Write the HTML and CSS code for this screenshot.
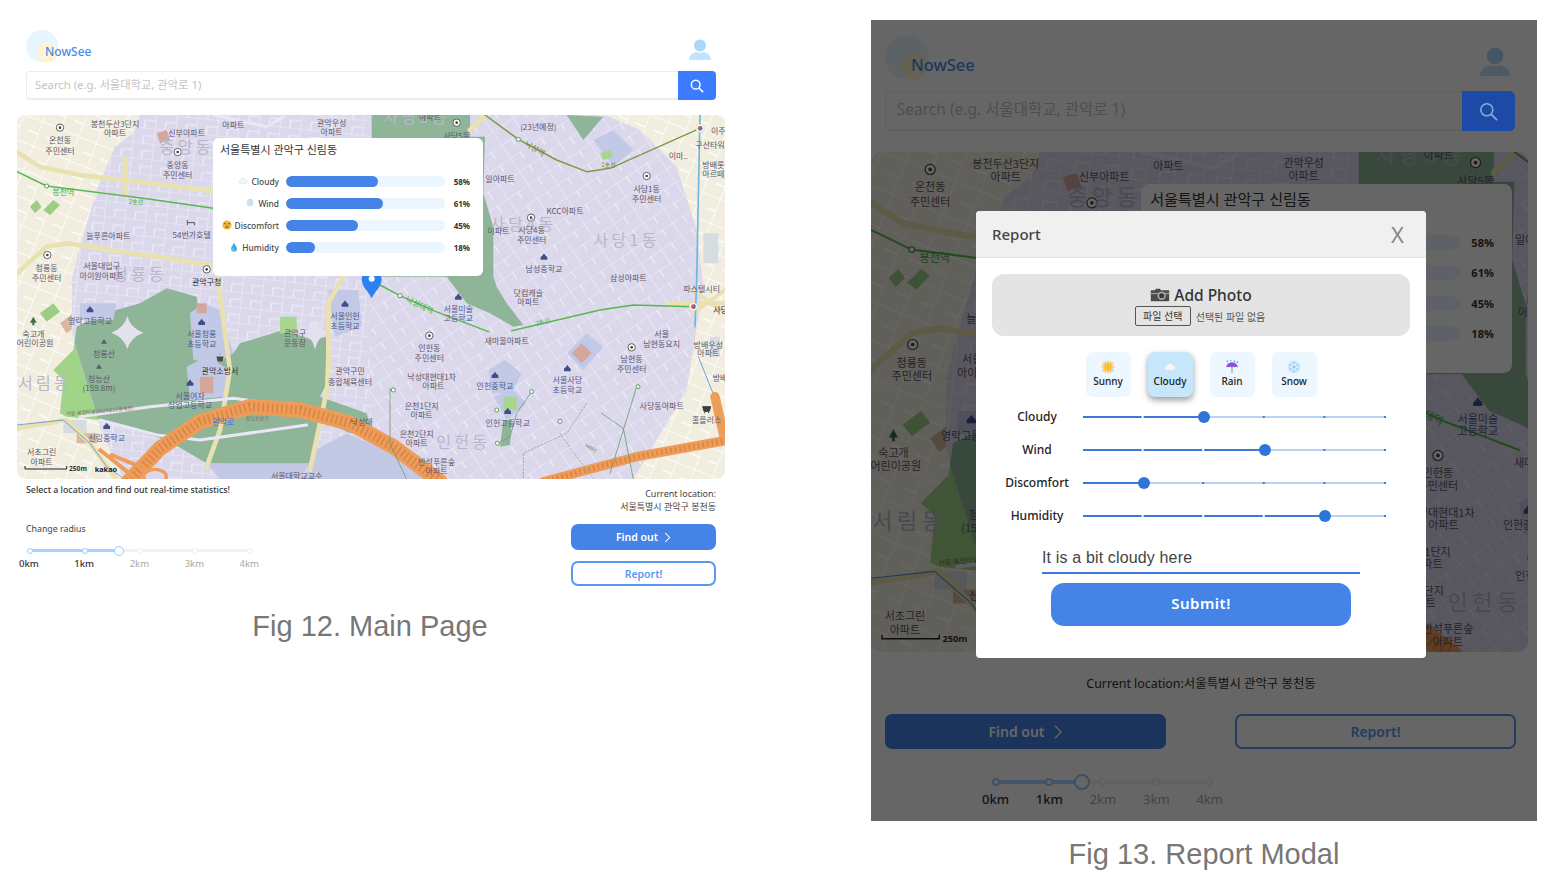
FILE: index.html
```html
<!DOCTYPE html>
<html>
<head>
    <meta charset="utf-8">
    <title>NowSee</title>
    <link rel="stylesheet" href="styles.css">
</head>
<body>
    <!-- Shared drawings: small icons and the map, used by both figures -->
    <svg class="defs" width="0" height="0">
        <defs>
            <symbol id="i-cloud" viewBox="0 0 24 24">
                <path d="M6 18a4 4 0 0 1-.6-7.9A6 6 0 0 1 17 9a4.5 4.5 0 0 1 1 9z" fill="#f4f5f8" stroke="#d3d8df"/>
            </symbol>
            <symbol id="i-wind" viewBox="0 0 24 24">
                <path d="M13 2c5 1 8 6 7 11s-6 9-11 7-6-8-4-12 5-7 8-6z" fill="#c9dff3"/>
                <path d="M9 8c4-2 7 0 6 4s-4 3-4 1" fill="none" stroke="#f4f9fe" stroke-width="2"/>
                <path d="M15 3l-3 8 5 3" fill="none" stroke="#8db2d4"/>
            </symbol>
            <symbol id="i-face" viewBox="0 0 24 24">
                <circle cx="12" cy="12" r="11" fill="#f3b53e"/>
                <path d="M5 8l5 2M19 8l-5 2" stroke="#7a4a10" stroke-width="2"/>
                <path d="M7 18c2-4 8-4 10 0z" fill="#7a4a10"/>
            </symbol>
            <symbol id="i-drop" viewBox="0 0 24 24">
                <path d="M12 1C9 8 5 11 5 16a7 7 0 0 0 14 0c0-5-4-8-7-15z" fill="#41a9e6"/>
                <path d="M9 16c0 2 1 3 3 4" fill="none" stroke="#d6f0ff" stroke-width="2"/>
            </symbol>
            <symbol id="i-sun" viewBox="0 0 24 24">
                <path d="M12 1v22M1 12h22M4 4l16 16M20 4L4 20M7 2l10 20M17 2L7 22M2 7l20 10M2 17l20-10" stroke="#f5a623" stroke-width="1.6"/>
                <circle cx="12" cy="12" r="6.5" fill="#fbc02d"/>
            </symbol>
            <symbol id="i-rain" viewBox="0 0 24 24">
                <path d="M12 12v10" stroke="#777" stroke-width="1.4"/>
                <path d="M2 13a10 9 0 0 1 20 0c-2-2-4-2-5 0-1-2-3-2-5 0-2-2-4-2-5 0-1-2-3-2-5 0z" fill="#8a52d6"/>
                <path d="M4 1v3M10 0v2M16 1v3M21 2v3" stroke="#3d8fe0" stroke-width="1.8"/>
            </symbol>
            <symbol id="i-snow" viewBox="0 0 24 24">
                <circle cx="12" cy="12" r="11" fill="#cbe7fb"/>
                <path d="M12 3v18M4 7.500l16 9M20 7.500l-16 9" stroke="#84c2f0" stroke-width="1.600"/>
                <circle cx="12" cy="12" r="4" fill="none" stroke="#f3fbff" stroke-width="1.500"/>
            </symbol>
            <symbol id="i-camera" viewBox="0 0 24 18">
                <path d="M1 4h5l1-2h5l1 2h10v13H1z" fill="#4b4b4b"/>
                <rect x="1" y="7" width="22" height="1.600" fill="#9a9a9a"/>
                <circle cx="14" cy="10.500" r="5" fill="#a6a6a6"/>
                <circle cx="14" cy="10.500" r="3" fill="#3a3a3a"/>
            </symbol>

            <!-- map markers -->
            <g id="mk-center"><circle r="11" fill="#fff" stroke="#444" stroke-width="2.500"/><circle r="4" fill="#444"/></g>
            <path id="mk-school" d="M0-12l5 7 5 4v8H-10v-8l5-4z" fill="#3f4f8a"/>
            <path id="mk-peak" d="M0-8l9 14H-9z" fill="#55606a"/>
            <g id="mk-stop"><circle r="6" fill="#fff" stroke="#5c9a62" stroke-width="3"/></g>
            <g id="mk-subway"><circle r="12" fill="#fff" stroke="#d8d2a8" stroke-width="2"/><circle r="7" fill="#e0583c"/><path d="M0-7a7 7 0 0 1 0 14z" fill="#3f78d8"/></g>

            <pattern id="st-a" width="62" height="46" patternUnits="userSpaceOnUse" patternTransform="rotate(6)">
                <path d="M0 0H62M0 0V46M31 23V46M31 23H62" stroke="#f0eef9" stroke-width="3.500" fill="none"/>
            </pattern>
            <pattern id="st-b" width="74" height="48" patternUnits="userSpaceOnUse" patternTransform="rotate(-34)">
                <path d="M0 0H74M0 0V48M37 0V24" stroke="#f0eef9" stroke-width="3.500" fill="none"/>
            </pattern>
            <pattern id="st-c" width="58" height="78" patternUnits="userSpaceOnUse" patternTransform="rotate(22)">
                <path d="M0 0H58M0 0V78M29 40H58" stroke="#fff" stroke-width="4" fill="none"/>
            </pattern>
            <clipPath id="district">
                <path d="M420 285L400 340 345 380 290 510 235 700 215 780V930L230 990 280 1150 300 1220 370 1378H1900L2000 1210 2060 1110 2110 800 2090 630 2030 440 1920 330 1815 285z"/>
            </clipPath>
            <path id="park" d="M230 920L330 875 420 850 500 805 590 830 610 1000 700 1000 720 970 850 930 940 960 980 950 975 1100 960 1130 1100 1180 1115 1230 1050 1240 970 1200 940 1290 930 1340 620 1330 500 1260 300 1200 200 1190 180 1180 190 1080 160 1050 220 990zM1115 285H1410V350H1455L1450 520 1480 620 1480 770 1490 800 1520 850 1570 915 1540 920 1470 880 1400 850 1340 770H1115z"/>

            <symbol id="map-art" viewBox="51 285 2124 1092">
                <rect x="51" y="285" width="2124" height="1092" fill="#f1eee0"/>
                <rect x="51" y="285" width="2124" height="1092" fill="url(#st-c)"/>
                <use href="#park" fill="#a0d488"/>
                <path d="M1950 420h40v70h-40zM2110 640h45v90h-45zM2130 950h30v60h-30zM190 1200h70v40h-70z" fill="#d6dde0"/>
                <path d="M230 1240h60v30h-60zM220 880l-40 30 20 30 40-30z" fill="#d8b99c"/>

                <g clip-path="url(#district)">
                    <rect x="51" y="285" width="2124" height="1092" fill="#dcd8ec"/>
                    <rect x="51" y="285" width="1060" height="1092" fill="url(#st-a)"/>
                    <rect x="1110" y="285" width="1065" height="1092" fill="url(#st-b)"/>
                    <use href="#park" fill="#8fb598"/>
                    <path d="M620 1330H930L900 1378H660zM945 1290L1040 1240 1180 1300 1320 1378H910z" fill="#c3c8e4"/>
                </g>

                <!-- school grounds and other patches -->
                <path d="M240 850h110l-10 50H240zM570 880l40-30 50 20 40 130-50 30-70-10zM560 1040l60-30 70 40-20 80-100 10zM985 810h90l10 110-80 30zM1465 1050l50-30 50 40-30 60h-60zM1700 1000l60-60 50 40-60 70zM1480 1130l60-20 40 40-60 50zM1780 360l60-30 60 60-60 50z" fill="#c2c9e6"/>
                <path d="M600 1070h40v50h-40zM1715 1000l30-30 30 30-30 30zM590 850h30v30h-30zM470 340l30-10 10 30-30 10z" fill="#d3a79c"/>
                <path d="M1700 285l110 5-60 70zM1510 1200l-10 80 30-5 5-75z" fill="#8fb598"/>
                <path d="M1510 1130h40v40h-40zM1800 400l30-10 10 20-30 10zM840 890h50v50h-50z" fill="#a9d68f"/>
                <path d="M120 880l40-30 20 25-40 30zM90 560l20-20 15 20-20 20zM130 570l30-30 20 15-30 30z" fill="#9ccd85"/>

                <!-- four-point stars -->
                <path d="M382 888q8 35 48 50-40 15-48 50-8-35-48-50 40-15 48-50zM945 900q8 30 45 38-37 10-45 50-8-40-45-50 37-8 45-38z" fill="#e4e1ee"/>

                <!-- main roads -->
                <g fill="none" stroke-linecap="round" stroke-linejoin="round">
                    <path d="M40 390L120 440 240 465 700 520M40 770L140 680 200 670 700 745M375 415V525M650 750L690 1050 660 1230 620 1340M1040 750L985 850 985 1090 930 1350M1455 285L1410 330M2010 850H2175" stroke="#e9e1b0" stroke-width="14"/>
                    <path d="M2080 810L2175 880M2175 810L2080 880" stroke="#e9e1b0" stroke-width="11"/>
                    <path d="M240 1190L450 1160 700 1135 850 1155M300 1200L470 1245 600 1260 920 1215M640 285L800 320 850 290" stroke="#e9e6f5" stroke-width="9"/>
                    <path d="M51 1225L200 1200 270 1270 350 1378" stroke="#e9e1b0" stroke-width="14"/>

                    <!-- subway lines -->
                    <path d="M51 455L140 498 430 535 640 565M1140 795L1200 827 1300 872 1465 935M1535 932L1800 870 1900 855 2080 860" stroke="#58b84e" stroke-width="4.500"/>
                    <path d="M1455 285L1555 358 1670 420 1760 455 1830 445 2100 325" stroke="#7d9a4a" stroke-width="4.500"/>
                    <path d="M2100 285L2090 780 2085 920" stroke="#6db8de" stroke-width="5"/>
                    <path d="M2095 1010L2175 1210" stroke="#4a93dc" stroke-width="2.500"/>
                    <path d="M51 1215L190 1200 270 1270 320 1340 375 1378" stroke="#5b8fd8" stroke-width="2.500"/>

                    <!-- expressway -->
                    <path d="M385 1385L480 1285 600 1205 750 1160 900 1170 1050 1210 1180 1280 1320 1385" stroke="#ee9c5a" stroke-width="46"/>
                    <path d="M385 1385L480 1285 600 1205 750 1160 900 1170 1050 1210 1180 1280 1320 1385" stroke="#d98644" stroke-width="28" stroke-dasharray="5 9" stroke-linecap="butt"/>
                    <path d="M1630 1385L1910 1310 2175 1262M2145 1130L2172 1250" stroke="#ee9c5a" stroke-width="28"/>
                    <path d="M1630 1385L1910 1310 2175 1262" stroke="#d98644" stroke-width="16" stroke-dasharray="5 9" stroke-linecap="butt"/>
                    <path d="M300 1290L400 1370M335 1305L420 1340 500 1385" stroke="#ee9c5a" stroke-width="12"/>
                    <ellipse cx="465" cy="1370" rx="34" ry="22" fill="#dcd8ec" stroke="#ee9c5a" stroke-width="10"/>

                    <!-- trails -->
                    <path d="M1170 1105L1170 1270 1220 1378M1595 1115L1550 1180 1530 1250 1495 1270M1910 1100L1870 1230 1830 1360M1805 1180L1870 1225 1900 1378" stroke="#6f9c74" stroke-width="2.500"/>
                    <path d="M1760 1150L1700 1240 1570 1300 1570 1378M1680 1240L1780 1378" stroke="#86a98a" stroke-width="2.500" stroke-dasharray="5 6"/>
                </g>

                <use href="#mk-stop" x="140" y="498"/>
                <use href="#mk-stop" x="1555" y="358"/>
                <use href="#mk-stop" x="1200" y="827"/>
                <use href="#mk-stop" x="1180" y="1110"/>
                <use href="#mk-stop" x="1595" y="1115"/>
                <use href="#mk-stop" x="1490" y="1170"/>
                <use href="#mk-stop" x="1680" y="1204"/>
                <use href="#mk-stop" x="1492" y="1270"/>
                <use href="#mk-stop" x="1914" y="1100"/>
                <use href="#mk-subway" x="2100" y="325"/>
                <use href="#mk-subway" x="2080" y="860"/>

                <use href="#mk-center" x="180" y="323"/>
                <use href="#mk-center" x="533" y="396"/>
                <use href="#mk-center" x="142" y="705"/>
                <use href="#mk-center" x="620" y="748"/>
                <use href="#mk-center" x="1370" y="308"/>
                <use href="#mk-center" x="1940" y="468"/>
                <use href="#mk-center" x="1593" y="593"/>
                <use href="#mk-center" x="1288" y="947"/>
                <use href="#mk-center" x="1895" y="982"/>

                <use href="#mk-school" x="270" y="870"/>
                <use href="#mk-school" x="605" y="908"/>
                <use href="#mk-school" x="570" y="1090"/>
                <use href="#mk-school" x="320" y="1220"/>
                <use href="#mk-school" x="1035" y="853"/>
                <use href="#mk-school" x="1632" y="712"/>
                <use href="#mk-school" x="1375" y="832"/>
                <use href="#mk-school" x="1485" y="1067"/>
                <use href="#mk-school" x="1523" y="1175"/>
                <use href="#mk-school" x="1702" y="1047"/>
                <use href="#mk-peak" x="312" y="965"/>
                <use href="#mk-peak" x="297" y="1040"/>
                <path d="M100 890l10 18h-7v8h-6v-8h-7z" fill="#3e6b4a"/>
                <path d="M650 1010h20l-3 14h-14zM660 1005v-6" fill="#4d4a3c" stroke="#4d4a3c"/>
                <path d="M2108 1160h24l-4 14h-16zM2112 1178h3M2124 1178h3" fill="#3d3d3d" stroke="#3d3d3d" stroke-width="3"/>
                <path d="M562 600v16M562 608h22v8" fill="none" stroke="#555" stroke-width="3"/>

                <!-- faint district names -->
                <g class="ml-big">
                    <text x="560" y="400">중앙동</text>
                    <text x="135" y="1108">서림동</text>
                    <text x="1880" y="678">사당1동</text>
                    <text x="1570" y="630">사당4동</text>
                    <text x="1390" y="1285">인헌동</text>
                    <text x="1250" y="310">사당5동</text>
                    <text x="420" y="780">청룡동</text>
                </g>

                <g class="ml">
                    <text x="345" y="320">봉천두산3단지</text><text x="345" y="348">아파트</text>
                    <text x="180" y="370">온천동</text><text x="180" y="402">주민센터</text>
                    <text x="560" y="348">신부아파트</text>
                    <text x="700" y="325">아파트</text>
                    <text x="995" y="318">관악우성</text><text x="995" y="346">아파트</text>
                    <text x="533" y="443">중앙동</text><text x="533" y="473">주민센터</text>
                    <text x="575" y="653">54번가호텔</text>
                    <text x="325" y="658">늘푸른아파트</text>
                    <text x="140" y="753">청룡동</text><text x="140" y="783">주민센터</text>
                    <text x="305" y="746">서울대입구</text><text x="305" y="776">아이원아파트</text>
                    <text x="1290" y="300">아파트</text>
                    <text x="1370" y="358">사당5동</text>
                    <text x="1615" y="330">(23년예정)</text>
                    <text x="2130" y="383">구산타워</text>
                    <text x="2155" y="343">이주</text>
                    <text x="2035" y="418">이마..</text>
                    <text x="2140" y="443">방배롯</text><text x="2140" y="471">아르떼</text>
                    <text x="1940" y="516">사당1동</text><text x="1940" y="546">주민센터</text>
                    <text x="1500" y="485">일아파트</text>
                    <text x="1695" y="583">KCC아파트</text>
                    <text x="1595" y="640">사당4동</text><text x="1595" y="670">주민센터</text>
                    <text x="1495" y="643">이파트</text>
                    <text x="1885" y="783">삼성아파트</text>
                    <text x="100" y="950">숙고개</text><text x="105" y="978">어린이공원</text>
                    <text x="312" y="1010">청룡산</text>
                    <text x="297" y="1085">청능산</text><text x="297" y="1113">(159.8m)</text>
                    <text x="1050" y="1061">관악구민</text><text x="1050" y="1095">종합체육센터</text>
                    <text x="885" y="948">관악구</text><text x="885" y="978">운동장</text>
                    <text x="125" y="1306">서초그린</text><text x="125" y="1336">아파트</text>
                    <text x="1085" y="1216">낙성대</text>
                    <text x="890" y="1378">서울대학교교수</text>
                    <text x="2105" y="815">파스텔시티</text>
                    <text x="2125" y="983">방배우성</text><text x="2125" y="1008">아파트</text>
                    <text x="2160" y="1083">방배</text>
                    <text x="1985" y="951">서울</text><text x="1985" y="980">남현동요지</text>
                    <text x="1895" y="1026">남현동</text><text x="1895" y="1056">주민센터</text>
                    <text x="1985" y="1166">사당동아파트</text>
                    <text x="2120" y="1210">홈플러스</text>
                    <text x="1585" y="828">닷컴캐슬</text><text x="1585" y="855">아파트</text>
                    <text x="1520" y="973">새마을아파트</text>
                    <text x="1288" y="993">인헌동</text><text x="1288" y="1023">주민센터</text>
                    <text x="1295" y="1081">낙성대현대1차</text><text x="1300" y="1108">아파트</text>
                    <text x="1265" y="1166">은천1단지</text><text x="1265" y="1193">아파트</text>
                    <text x="1250" y="1251">은천2단지</text><text x="1250" y="1278">아파트</text>
                    <text x="1310" y="1335">반석푸른숲</text><text x="1310" y="1363">아파트</text>
                </g>
                <g class="ml ml-blue">
                    <text x="270" y="913">영락고등학교</text>
                    <text x="605" y="950">서울청룡</text><text x="605" y="980">초등학교</text>
                    <text x="570" y="1136">서울여자</text><text x="570" y="1163">상업고등학교</text>
                    <text x="1035" y="898">서울인헌</text><text x="1035" y="926">초등학교</text>
                    <text x="320" y="1263">신림중학교</text>
                    <text x="1632" y="755">남성중학교</text>
                    <text x="1375" y="876">서울미술</text><text x="1375" y="903">고등학교</text>
                    <text x="1485" y="1108">인헌중학교</text>
                    <text x="1523" y="1218">인헌고등학교</text>
                    <text x="1702" y="1090">서울사당</text><text x="1702" y="1118">초등학교</text>
                    <text x="670" y="1216" class="ml-road">관악로</text>
                </g>
                <g class="ml ml-dark">
                    <text x="620" y="796">관악구청</text>
                    <text x="660" y="1063">관악소방서</text>
                    <text x="2140" y="878" text-anchor="start">사당역</text>
                </g>
                <g class="ml ml-green">
                    <text x="190" y="525">봉천역</text>
                    <text x="408" y="552" font-size="18">2호선</text>
                    <text transform="translate(1255 863) rotate(25)">낙성대역</text>
                    <text transform="translate(1630 912) rotate(-15)" font-size="18">2호선</text>
                </g>
                <g class="ml ml-olive">
                    <text transform="translate(1600 393) rotate(32)">낙성역</text>
                    <text x="1825" y="442" font-size="18">1호선</text>
                </g>
                <text class="ml ml-tiny" x="772" y="1199">강남순환로</text>
                <text class="ml ml-tiny" transform="translate(300 1178) rotate(-5)">서림-봉천터널(2023년12월예정)</text>
                <text class="ml ml-tiny" transform="translate(1775 1280) rotate(210)">100m</text>

                <path d="M75 1338v9H200v-9" fill="none" stroke="#222" stroke-width="3"/>
                <text class="ml-scale" x="207" y="1354">250m</text>
                <text class="ml-kakao" x="284" y="1355">kakao</text>

                <!-- location pin -->
                <path d="M1115 835c-10-22-30-34-30-58a30 30 0 0 1 60 0c0 24-20 36-30 58z" fill="#2f80f0"/>
                <circle cx="1115" cy="776" r="9" fill="#fff"/>
            </symbol>
        </defs>
    </svg>

    <div class="page">
        <!-- Fig 12 -->
        <section class="figure fig-main">
            <div class="top">
                <div class="brand-row">
                    <div class="logo"><span class="logo-sun"></span><span class="logo-name">NowSee</span></div>
                    <svg class="user-icon" viewBox="0 0 22 21"><circle cx="11" cy="6.500" r="6" fill="#a9d8fb"/><path d="M0 21c0-5 4-7 7-8 2 1 6 1 8 0 3 1 7 3 7 8z" fill="#c2e3fb"/></svg>
                </div>
                <div class="search">
                    <div class="search-input">Search (e.g. 서울대학교, 관악로 1)</div>
                    <div class="search-btn">
                        <svg viewBox="0 0 16 16" width="14" height="14"><circle cx="6.500" cy="6.500" r="5" fill="none" stroke="#fff" stroke-width="1.700"/><path d="M10 10l5 5" stroke="#fff" stroke-width="1.800"/></svg>
                    </div>
                </div>
            </div>
            <div class="map-panel">
                <svg class="map-svg"><use href="#map-art"/></svg>
                <div class="stats-card">
                    <div class="stats-title">서울특별시 관악구 신림동</div>
                    <div class="stat-row">
                        <div class="stat-label"><svg class="stat-icon"><use href="#i-cloud"/></svg>Cloudy</div>
                        <div class="bar"><div class="bar-fill" style="width:58%"></div></div>
                        <div class="stat-pct">58%</div>
                    </div>
                    <div class="stat-row">
                        <div class="stat-label"><svg class="stat-icon"><use href="#i-wind"/></svg>Wind</div>
                        <div class="bar"><div class="bar-fill" style="width:61%"></div></div>
                        <div class="stat-pct">61%</div>
                    </div>
                    <div class="stat-row">
                        <div class="stat-label"><svg class="stat-icon"><use href="#i-face"/></svg>Discomfort</div>
                        <div class="bar"><div class="bar-fill" style="width:45%"></div></div>
                        <div class="stat-pct">45%</div>
                    </div>
                    <div class="stat-row">
                        <div class="stat-label"><svg class="stat-icon"><use href="#i-drop"/></svg>Humidity</div>
                        <div class="bar"><div class="bar-fill" style="width:18%"></div></div>
                        <div class="stat-pct">18%</div>
                    </div>
                </div>
            </div>
            <div class="controls">
                <div class="controls-left">
                    <div class="hint">Select a location and find out real-time statistics!</div>
                    <div class="radius-title">Change radius</div>
                    <div class="radius">
                        <div class="radius-track">
                            <div class="radius-fill" style="width:40.500%"></div>
                            <span class="radius-dot on"></span><span class="radius-dot on"></span><span class="radius-dot"></span><span class="radius-dot"></span><span class="radius-dot"></span>
                            <span class="radius-handle" style="left:40.500%"></span>
                        </div>
                        <div class="radius-labels"><span class="on">0km</span><span class="on">1km</span><span>2km</span><span>3km</span><span>4km</span></div>
                    </div>
                </div>
                <div class="controls-right">
                    <div class="location"><div>Current location:</div><div>서울특별시 관악구 봉천동</div></div>
                    <div class="btn btn-primary">Find out <svg class="chevron" viewBox="0 0 8 12"><path d="M1.500 1l5 5-5 5" fill="none" stroke="#fff" stroke-width="1.200"/></svg></div>
                    <div class="btn btn-outline">Report!</div>
                </div>
            </div>
            <div class="caption caption-main">Fig 12. Main Page</div>
        </section>

        <!-- Fig 13 -->
        <section class="figure fig-report">
            <div class="shot">
                <div class="top">
                    <div class="brand-row">
                        <div class="logo"><span class="logo-sun"></span><span class="logo-name">NowSee</span></div>
                        <svg class="user-icon" viewBox="0 0 22 21"><circle cx="11" cy="6.500" r="6" fill="#a9d8fb"/><path d="M0 21c0-5 4-7 7-8 2 1 6 1 8 0 3 1 7 3 7 8z" fill="#c2e3fb"/></svg>
                    </div>
                    <div class="search">
                        <div class="search-input">Search (e.g. 서울대학교, 관악로 1)</div>
                        <div class="search-btn">
                            <svg viewBox="0 0 16 16" width="14" height="14"><circle cx="6.500" cy="6.500" r="5" fill="none" stroke="#8fa8d8" stroke-width="1.300"/><path d="M10 10l5 5" stroke="#8fa8d8" stroke-width="1.400"/></svg>
                        </div>
                    </div>
                </div>
                <div class="map-panel">
                    <svg class="map-svg"><use href="#map-art"/></svg>
                    <div class="stats-card">
                        <div class="stats-title">서울특별시 관악구 신림동</div>
                        <div class="stat-row"><div class="stat-label"></div><div class="bar"><div class="bar-fill" style="width:58%"></div></div><div class="stat-pct">58%</div></div>
                        <div class="stat-row"><div class="stat-label"></div><div class="bar"><div class="bar-fill" style="width:61%"></div></div><div class="stat-pct">61%</div></div>
                        <div class="stat-row"><div class="stat-label"></div><div class="bar"><div class="bar-fill" style="width:45%"></div></div><div class="stat-pct">45%</div></div>
                        <div class="stat-row"><div class="stat-label"></div><div class="bar"><div class="bar-fill" style="width:18%"></div></div><div class="stat-pct">18%</div></div>
                    </div>
                </div>
                <div class="location-line">Current location:서울특별시 관악구 봉천동</div>
                <div class="btn-row">
                    <div class="btn btn-primary">Find out <svg class="chevron" viewBox="0 0 8 12"><path d="M1.500 1l5 5-5 5" fill="none" stroke="#fff" stroke-width="1"/></svg></div>
                    <div class="btn btn-outline">Report!</div>
                </div>
                <div class="radius">
                    <div class="radius-track">
                        <div class="radius-fill" style="width:40.500%"></div>
                        <span class="radius-dot on"></span><span class="radius-dot on"></span><span class="radius-dot"></span><span class="radius-dot"></span><span class="radius-dot"></span>
                        <span class="radius-handle" style="left:40.500%"></span>
                    </div>
                    <div class="radius-labels"><span class="on">0km</span><span class="on">1km</span><span>2km</span><span>3km</span><span>4km</span></div>
                </div>

                <div class="dim"></div>

                <div class="modal">
                    <div class="modal-head"><span>Report</span><span class="modal-close">X</span></div>
                    <div class="modal-body">
                        <div class="photo-box">
                            <div class="photo-title"><svg class="photo-icon"><use href="#i-camera"/></svg>Add Photo</div>
                            <div class="file-row"><span class="file-btn">파일 선택</span><span>선택된 파일 없음</span></div>
                        </div>
                        <div class="weather">
                            <div class="weather-tile"><svg class="weather-icon"><use href="#i-sun"/></svg>Sunny</div>
                            <div class="weather-tile selected"><svg class="weather-icon"><use href="#i-cloud"/></svg>Cloudy</div>
                            <div class="weather-tile"><svg class="weather-icon"><use href="#i-rain"/></svg>Rain</div>
                            <div class="weather-tile"><svg class="weather-icon"><use href="#i-snow"/></svg>Snow</div>
                        </div>
                        <div class="sliders">
                            <div class="slider-row"><span class="slider-name">Cloudy</span><div class="range"><div class="range-fill" style="width:40%"></div><span class="range-thumb" style="left:40%"></span></div></div>
                            <div class="slider-row"><span class="slider-name">Wind</span><div class="range"><div class="range-fill" style="width:60%"></div><span class="range-thumb" style="left:60%"></span></div></div>
                            <div class="slider-row"><span class="slider-name">Discomfort</span><div class="range"><div class="range-fill" style="width:20%"></div><span class="range-thumb" style="left:20%"></span></div></div>
                            <div class="slider-row"><span class="slider-name">Humidity</span><div class="range"><div class="range-fill" style="width:80%"></div><span class="range-thumb" style="left:80%"></span></div></div>
                        </div>
                        <div class="note">It is a bit cloudy here</div>
                        <div class="submit">Submit!</div>
                    </div>
                </div>
            </div>
            <div class="caption caption-report">Fig 13. Report Modal</div>
        </section>
    </div>
</body>
</html>
```

FILE: styles.css
```css
* {
    box-sizing: border-box;
}

body {
    margin: 0;
    background: #fff;
    font-family: "Noto Sans", "Noto Sans CJK KR", sans-serif;
    color: #333;
}

.defs {
    position: absolute;
}

.page {
    display: flex;
    align-items: flex-start;
    width: 1560px;
    height: 882px;
    overflow: hidden;
}

.fig-main {
    width: 740px;
    margin-right: 131px;
    padding: 30px 0 0 17px;
}

.fig-report {
    width: 666px;
    margin-top: 20px;
}

/* Header and search */
.top {
    width: 690px;
    margin: 0 0 15px 9px;
}

.brand-row {
    display: flex;
    justify-content: space-between;
    align-items: flex-start;
    height: 41px;
}

.logo {
    position: relative;
    width: 32px;
    height: 32px;
    border-radius: 50%;
    background: #e8f5fe;
}

.logo-sun {
    position: absolute;
    left: 11px;
    top: 13px;
    width: 20px;
    height: 20px;
    border-radius: 50%;
    background: #fdf5d2;
}

.logo-name {
    position: absolute;
    left: 19px;
    top: 13px;
    font-size: 12px;
    line-height: 18px;
    font-weight: 500;
    color: #4a8be8;
}

.user-icon {
    width: 22px;
    height: 21px;
    margin: 9px 5px 0 0;
}

.search {
    display: flex;
    height: 29px;
}

.search-input {
    flex: 1;
    padding-left: 8px;
    border: 1px solid #eceded;
    border-bottom-width: 2px;
    border-right: 0;
    border-radius: 4px 0 0 4px;
    font-size: 11.300px;
    line-height: 26px;
    color: #c4c4c4;
}

.search-btn {
    display: flex;
    align-items: center;
    justify-content: center;
    width: 38px;
    background: #3a7bff;
    border-radius: 0 4px 4px 0;
}

/* Map */
.map-panel {
    position: relative;
    width: 708px;
    height: 364px;
    border-radius: 8px;
    overflow: hidden;
}

.map-svg {
    display: block;
    width: 708px;
    height: 364px;
}

.ml, .ml-big {
    font-family: "Noto Sans CJK KR", sans-serif;
    text-anchor: middle;
}

.ml {
    font-size: 24px;
    fill: #5c5769;
}

.ml-big {
    font-size: 48px;
    letter-spacing: 10px;
    fill: #b9b5ca;
}

.ml-blue {
    fill: #4e5b8b;
}

.ml-road {
    fill: #3f6fd8;
}

.ml-dark {
    fill: #2a2a2a;
}

.ml-green {
    fill: #46b13f;
}

.ml-olive {
    fill: #6f8a3c;
}

.ml-tiny {
    font-size: 15px;
    fill: #7a6a5a;
}

.ml-scale, .ml-kakao {
    font-family: "Noto Sans", sans-serif;
    font-size: 20px;
    font-weight: 700;
    fill: #333;
}

.ml-kakao {
    font-size: 22px;
    fill: #222;
}

.stats-card {
    position: absolute;
    left: 196px;
    top: 23px;
    width: 270px;
    height: 138px;
    padding: 4px 13px 0 7px;
    background: #fff;
    border-radius: 6px;
}

.stats-title {
    font-size: 11px;
    line-height: 15px;
    color: #333;
    margin-bottom: 13px;
}

.stat-row {
    display: grid;
    grid-template-columns: 59px 159px 18px;
    column-gap: 7px;
    align-items: center;
    height: 22px;
}

.stat-label {
    display: flex;
    justify-content: flex-end;
    align-items: center;
    gap: 3px;
    font-size: 8.400px;
    font-weight: 500;
    color: #4a4a4a;
    white-space: nowrap;
}

.stat-icon {
    width: 10px;
    height: 10px;
}

.bar {
    height: 11px;
    border-radius: 6px;
    background: #ebf6fe;
    overflow: hidden;
}

.bar-fill {
    height: 100%;
    background: #4583e6;
    border-radius: 6px;
}

.stat-pct {
    font-size: 8px;
    font-weight: 700;
    color: #333;
    text-align: right;
}

/* Controls under the map (Fig 12) */
.controls {
    display: flex;
    justify-content: space-between;
    width: 690px;
    margin-left: 9px;
}

.hint {
    margin-top: 5px;
    font-size: 8.800px;
    line-height: 12px;
    font-weight: 500;
    color: #333;
}

.radius-title {
    margin-top: 27px;
    font-size: 8.800px;
    line-height: 12px;
    color: #444;
}

.controls-left .radius {
    width: 220px;
    margin: 14px 0 0 4px;
}

.radius-track {
    position: relative;
    display: flex;
    justify-content: space-between;
    align-items: center;
    height: 3px;
    background: #f3f3f3;
}

.radius-fill {
    position: absolute;
    left: 0;
    top: 0;
    height: 3px;
    background: #a6d1ff;
}

.radius-dot {
    position: relative;
    width: 6px;
    height: 6px;
    margin: 0 -3px;
    background: #fff;
    border: 1px solid #eeeeee;
    border-radius: 50%;
}

.radius-dot.on {
    border-color: #9accff;
}

.radius-handle {
    position: absolute;
    top: -3.500px;
    width: 10px;
    height: 10px;
    margin-left: -5px;
    background: #fff;
    border: 1.500px solid #98c8ff;
    border-radius: 50%;
}

.radius-labels {
    display: flex;
    justify-content: space-between;
    margin: 5px -9px 0 -11px;
    font-size: 9.500px;
    line-height: 13px;
    color: #a8a8a8;
}

.radius-labels .on {
    color: #333;
    font-weight: 500;
}

.controls-right {
    width: 145px;
}

.location {
    margin-top: 8px;
    font-size: 9px;
    line-height: 13px;
    text-align: right;
    color: #444;
}

.btn {
    display: flex;
    align-items: center;
    justify-content: center;
    gap: 6px;
    height: 26px;
    border-radius: 7px;
    font-size: 10.500px;
    font-weight: 600;
}

.controls-right .btn-primary {
    margin-top: 11px;
}

.controls-right .btn-outline {
    height: 25px;
    margin-top: 11px;
}

.btn-primary {
    background: #4583e6;
    color: #fff;
}

.btn-outline {
    background: #fff;
    border: 2px solid #5a97f2;
    color: #5a97f2;
}

.chevron {
    width: 7px;
    height: 11px;
}

/* Captions */
.caption {
    font-family: "Liberation Sans", sans-serif;
    font-size: 29px;
    line-height: 34px;
    color: #777;
    text-align: center;
}

.caption-main {
    width: 708px;
    margin: 23px 0 0 -1px;
}

.caption-report {
    margin-top: 16px;
}

/* Fig 13 */
.shot {
    position: relative;
    height: 801px;
    padding-top: 15px;
    overflow: hidden;
}

.shot .top {
    zoom: 1.375;
    width: 458px;
    margin-left: 10px;
}

.shot .user-icon {
    margin-right: 3px;
}

/* this button stays bright under the dimmed layer in the screenshot */
.shot .search-btn {
    position: relative;
    z-index: 1;
    background: #1c4aa6;
}

.shot .map-panel {
    zoom: 1.375;
    width: 478px;
}

.location-line {
    margin-top: 23px;
    padding-right: 6px;
    font-size: 12.400px;
    line-height: 18px;
    text-align: center;
    color: #333;
}

.btn-row {
    display: flex;
    justify-content: space-between;
    width: 631px;
    margin: 21px 0 0 14px;
}

.btn-row .btn {
    width: 281px;
    height: 35px;
    gap: 8px;
    font-size: 14px;
}

.btn-row .chevron {
    width: 10px;
    height: 16px;
}

.shot .radius {
    width: 213px;
    margin: 31px 0 0 125px;
}

.shot .radius-track {
    height: 4px;
}

.shot .radius-fill {
    height: 4px;
}

.shot .radius-dot {
    width: 8px;
    height: 8px;
    margin: 0 -4px;
    border-width: 2px;
}

.shot .radius-handle {
    top: -6px;
    width: 16px;
    height: 16px;
    margin-left: -8px;
    border-width: 2px;
}

.shot .radius-labels {
    margin: 9px -14px 0;
    font-size: 13px;
}

.dim {
    position: absolute;
    inset: 0;
    background: rgba(0, 0, 0, 0.6);
}

.modal {
    position: absolute;
    left: 105px;
    top: 191px;
    width: 450px;
    height: 447px;
    background: #fff;
    border-radius: 4px;
    overflow: hidden;
}

.modal-head {
    display: flex;
    justify-content: space-between;
    align-items: center;
    height: 47px;
    padding: 0 22px 0 16px;
    background: #f0f0f0;
    border-bottom: 1px solid #e6e6e6;
    font-size: 15px;
    font-weight: 500;
    color: #444;
}

.modal-close {
    font-size: 22px;
    font-weight: 400;
    color: #888;
}

.modal-body {
    padding: 16px 16px 0;
}

.photo-box {
    height: 62px;
    padding-top: 9px;
    background: #e4e4e4;
    border-radius: 12px;
    text-align: center;
}

.photo-title {
    display: flex;
    justify-content: center;
    align-items: center;
    gap: 4px;
    height: 23px;
    font-size: 15.500px;
    font-weight: 500;
    color: #333;
}

.photo-icon {
    width: 20px;
    height: 15px;
}

.file-row {
    display: flex;
    justify-content: center;
    align-items: center;
    gap: 5px;
    margin-left: -2px;
    font-size: 10px;
    color: #555;
}

.file-btn {
    width: 56px;
    height: 20px;
    border: 1px solid #555;
    border-radius: 2px;
    line-height: 18px;
    color: #333;
}

.weather {
    display: flex;
    justify-content: center;
    gap: 17px;
    margin: 16px 0 0 0;
}

.weather-tile {
    display: flex;
    flex-direction: column;
    align-items: center;
    width: 45px;
    height: 45px;
    padding-top: 8px;
    background: #ecf7ff;
    border-radius: 7px;
    font-size: 10px;
    line-height: 15px;
    font-weight: 500;
    color: #222;
}

.weather-tile.selected {
    background: #c6e6fc;
    box-shadow: 0 3px 6px rgba(0, 0, 0, 0.4);
}

.weather-icon {
    width: 14px;
    height: 14px;
}

.sliders {
    margin-top: 3px;
}

.slider-row {
    display: flex;
    align-items: center;
    height: 33px;
}

.slider-name {
    width: 90px;
    margin-right: 1px;
    font-size: 12px;
    font-weight: 500;
    text-align: center;
    color: #222;
}

.range {
    position: relative;
    width: 303px;
    height: 2px;
    background: linear-gradient(to right, #b9d3f2 calc(100% - 2px), #3b78d8 0) 0 0 / 60.600px 100%;
}

.range-fill {
    height: 100%;
    background: linear-gradient(to right, #3b78d8 calc(100% - 2px), #fff 0) 0 0 / 60.600px 100%;
}

.range-thumb {
    position: absolute;
    top: -5px;
    width: 12px;
    height: 12px;
    margin-left: -6px;
    background: #2f74d8;
    border-radius: 50%;
}

.note {
    width: 318px;
    height: 34px;
    margin: 8px 0 0 50px;
    border-bottom: 2px solid #3b78d8;
    font-family: "Liberation Sans", sans-serif;
    font-size: 16px;
    letter-spacing: 0.15px;
    line-height: 36px;
    color: #444;
}

.submit {
    display: flex;
    align-items: center;
    justify-content: center;
    width: 300px;
    height: 43px;
    margin: 9px 0 0 59px;
    padding-bottom: 3px;
    background: #4583e6;
    border-radius: 13px;
    font-size: 15px;
    font-weight: 600;
    letter-spacing: 0.5px;
    color: #fff;
}
```
